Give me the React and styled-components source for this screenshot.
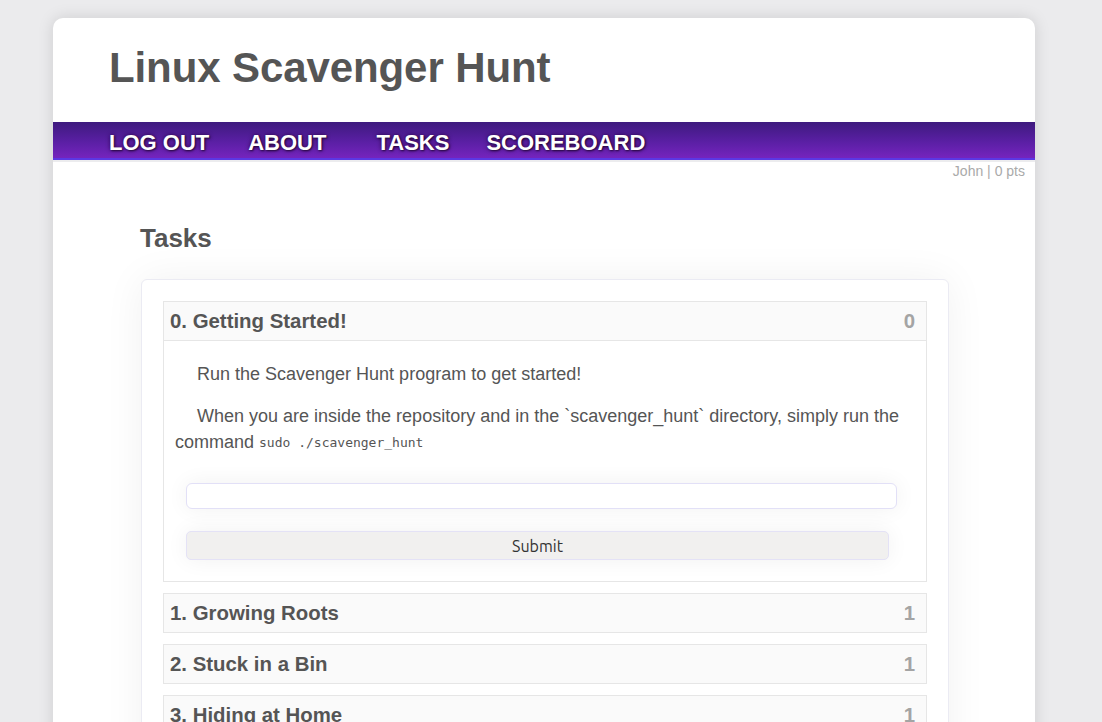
import React from "react";
import styled, { createGlobalStyle } from "styled-components";

const Global = createGlobalStyle`
  html, body { margin: 0; padding: 0; background: #ebebed; }
  body { font-family: "Liberation Sans", Arial, sans-serif; color: #555; overflow: hidden; }
  * { box-sizing: border-box; }
`;

const Page = styled.div`
  padding-top: 18px;
  padding-left: 53px;
  height: 722px;
`;

const Container = styled.div`
  width: 982px;
  min-height: 760px;
  background: #fff;
  border-radius: 10px 10px 0 0;
  box-shadow: 0 0 16px rgba(0, 0, 0, 0.13);
`;

const Header = styled.header`
  height: 104px;
  padding: 25px 0 0 56px;
`;

const Title = styled.h1`
  margin: 0;
  font-size: 42px;
  font-weight: bold;
  color: #555;
  line-height: 50px;
  letter-spacing: -0.1px;
`;

const Nav = styled.nav`
  height: 38px;
  display: flex;
  align-items: center;
  padding-left: 56px;
  background: linear-gradient(to bottom, #3e1a7e 0%, #5a1fa4 55%, #7524bd 100%);
  border-bottom: 2px solid #5b38e3;
  box-shadow: 0 2px 0 #ececee;
`;

const NavLink = styled.a`
  color: #fff;
  font-weight: bold;
  font-size: 22px;
  text-transform: uppercase;
  text-decoration: none;
  text-shadow: 0 0 4px rgba(40, 0, 60, 0.9), 1px 1px 2px rgba(0, 0, 0, 0.6);
  margin-left: ${(p) => p.$gap || 0}px;
  line-height: 36px;
  padding-top: 5px;
`;

const UserLine = styled.div`
  text-align: right;
  padding: 3px 10px 0 0;
  font-size: 14px;
  color: #aaa;
  height: 20px;
  line-height: 16px;
`;

const Main = styled.main`
  width: 808px;
  margin-left: 88px;
  padding-top: 42px;
`;

const SectionTitle = styled.h2`
  margin: 0 0 25px -1px;
  font-size: 26px;
  font-weight: bold;
  color: #555;
  line-height: 32px;
`;

const Card = styled.div`
  background: #fff;
  border: 1px solid #ebebf3;
  border-radius: 6px;
  padding: 21px 21px 40px 21px;
  box-shadow: 0 0 40px rgba(0, 0, 0, 0.06);
  display: flex;
  flex-direction: column;
  gap: 11px;
`;

const Task = styled.section`
  border: 1px solid #e6e6e6;
  background: #fff;
`;

const TaskHead = styled.div`
  height: ${(p) => (p.$open ? 39 : 38)}px;
  display: flex;
  align-items: center;
  justify-content: space-between;
  padding: 0 11px 0 6px;
  background: #fafafa;
  border-bottom: ${(p) => (p.$open ? "1px solid #e6e6e6" : "none")};
`;

const TaskName = styled.span`
  font-size: 20.4px;
  font-weight: bold;
  color: #555;
`;

const TaskPts = styled.span`
  font-size: 20.4px;
  font-weight: bold;
  color: #a4a4a4;
`;

const TaskBody = styled.div`
  padding: 20px 11px 21px 11px;
`;

const Para = styled.p`
  margin: 0 0 16px 0;
  font-size: 18px;
  line-height: 26px;
  text-indent: 22px;
  color: #555;
`;

const Code = styled.code`
  font-family: "DejaVu Sans Mono", "Liberation Mono", monospace;
  font-size: 13px;
  color: #555;
  vertical-align: 1px;
`;

const Form = styled.form`
  padding: 11px 29px 0 11px;
  display: flex;
  flex-direction: column;
  gap: 22px;
`;

const Input = styled.input`
  width: 711px;
  height: 26px;
  border: 1px solid #e2e0f7;
  border-radius: 6px;
  background: #fff;
  box-shadow: 0 0 22px rgba(0, 0, 0, 0.06);
  outline: none;
`;

const Button = styled.button`
  width: 703px;
  height: 29px;
  border: 1px solid #e4e2f6;
  border-radius: 5px;
  background: #f1f0ef;
  font-family: "Ubuntu", "DejaVu Sans", "Noto Sans", sans-serif;
  font-size: 16px;
  color: #333;
  box-shadow: 0 0 22px rgba(0, 0, 0, 0.06);
  padding: 0;
`;

const tasks = [
  { n: "1. Growing Roots", p: 1 },
  { n: "2. Stuck in a Bin", p: 1 },
  { n: "3. Hiding at Home", p: 1 },
];

export default function App() {
  return (
    <>
      <Global />
      <Page>
        <Container>
          <Header>
            <Title>Linux Scavenger Hunt</Title>
          </Header>
          <Nav>
            <NavLink href="#">Log Out</NavLink>
            <NavLink href="#" $gap={39}>About</NavLink>
            <NavLink href="#" $gap={50}>Tasks</NavLink>
            <NavLink href="#" $gap={37}>Scoreboard</NavLink>
          </Nav>
          <UserLine>John | 0 pts</UserLine>
          <Main>
            <SectionTitle>Tasks</SectionTitle>
            <Card>
              <Task>
                <TaskHead $open>
                  <TaskName>0. Getting Started!</TaskName>
                  <TaskPts>0</TaskPts>
                </TaskHead>
                <TaskBody>
                  <Para>Run the Scavenger Hunt program to get started!</Para>
                  <Para>
                    When you are inside the repository and in the `scavenger_hunt` directory, simply run the
                    command <Code>sudo ./scavenger_hunt</Code>
                  </Para>
                  <Form onSubmit={(e) => e.preventDefault()}>
                    <Input type="text" />
                    <Button type="submit">Submit</Button>
                  </Form>
                </TaskBody>
              </Task>
              {tasks.map((t) => (
                <Task key={t.n}>
                  <TaskHead>
                    <TaskName>{t.n}</TaskName>
                    <TaskPts>{t.p}</TaskPts>
                  </TaskHead>
                </Task>
              ))}
            </Card>
          </Main>
        </Container>
      </Page>
    </>
  );
}
